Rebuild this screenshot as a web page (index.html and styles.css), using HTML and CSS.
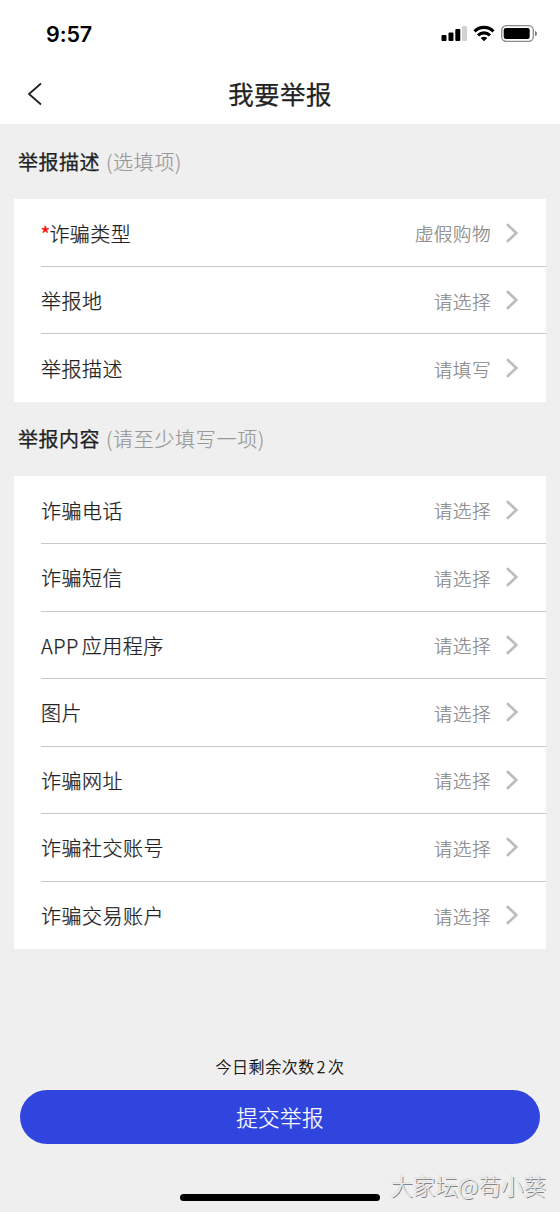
FILE: index.html
```html
<!DOCTYPE html>
<html lang="zh-CN">
<head>
<meta charset="utf-8">
<title>我要举报</title>
<link rel="stylesheet" href="styles.css">
</head>
<body>
<svg class="defs" width="0" height="0"><symbol id="chevron" viewBox="0 0 12 20"><path d="M1.800 2 10.300 10 1.800 18" fill="none" stroke="#bdbdbd" stroke-width="2.800" stroke-linecap="round"/></symbol></svg>
<div class="screen">
  <div class="status">
    <span class="time">9:57</span>
    <svg class="status-icons" width="98" height="20" viewBox="0 0 98 20">
      <rect x="1.500" y="11" width="5" height="6" rx="1"/>
      <rect x="8.500" y="8.500" width="5" height="8.500" rx="1"/>
      <rect x="15.300" y="5" width="5" height="12" rx="1"/>
      <rect x="22" y="2" width="5" height="15" rx="1" fill="#d2d2d2"/>
      <g fill="none" stroke="#000" stroke-width="3.100">
        <path d="M34.500 7.300a13.500 13.500 0 0 1 19 0"/>
        <path d="M38 11.300a8.700 8.700 0 0 1 12 0"/>
      </g>
      <path d="M40.700 14q3.300-2.500 6.600 0L44 17.300Z"/>
      <rect x="61.700" y="1.700" width="31.600" height="15.600" rx="4.500" fill="none" stroke="#8a8a8a" stroke-width="1.300"/>
      <rect x="63.700" y="4" width="26" height="11" rx="2.300"/>
      <path d="M95 7q2 .5 2 2.500t-2 2.500Z" fill="#777"/>
    </svg>
  </div>
  <header class="nav">
    <svg class="back" width="16" height="24" viewBox="0 0 16 24"><path d="M14 1.500 2 12l12 10.500" fill="none" stroke="#222" stroke-width="1.800"/></svg>
    <h1 class="title">我要举报</h1>
  </header>
  <main class="content">
    <h2 class="section">举报描述 <span class="hint">(选填项)</span></h2>
    <ul class="card">
      <li class="row"><span class="label"><span class="star">*</span>诈骗类型</span><span class="value">虚假购物</span><svg class="chev"><use href="#chevron"/></svg></li>
      <li class="row"><span class="label">举报地</span><span class="value">请选择</span><svg class="chev"><use href="#chevron"/></svg></li>
      <li class="row"><span class="label">举报描述</span><span class="value">请填写</span><svg class="chev"><use href="#chevron"/></svg></li>
    </ul>
    <h2 class="section">举报内容 <span class="hint">(请至少填写一项)</span></h2>
    <ul class="card card-wide">
      <li class="row"><span class="label">诈骗电话</span><span class="value">请选择</span><svg class="chev"><use href="#chevron"/></svg></li>
      <li class="row"><span class="label">诈骗短信</span><span class="value">请选择</span><svg class="chev"><use href="#chevron"/></svg></li>
      <li class="row"><span class="label"><span class="latin">APP</span>应用程序</span><span class="value">请选择</span><svg class="chev"><use href="#chevron"/></svg></li>
      <li class="row"><span class="label">图片</span><span class="value">请选择</span><svg class="chev"><use href="#chevron"/></svg></li>
      <li class="row"><span class="label">诈骗网址</span><span class="value">请选择</span><svg class="chev"><use href="#chevron"/></svg></li>
      <li class="row"><span class="label">诈骗社交账号</span><span class="value">请选择</span><svg class="chev"><use href="#chevron"/></svg></li>
      <li class="row"><span class="label">诈骗交易账户</span><span class="value">请选择</span><svg class="chev"><use href="#chevron"/></svg></li>
    </ul>
  </main>
  <footer class="footer">
    <p class="remain">今日剩余次数<span class="count">2</span>次</p>
    <button class="submit">提交举报</button>
    <div class="home"></div>
  </footer>
  <span class="watermark">大家坛@苟小葵</span>
</div>
</body>
</html>
```
FILE: styles.css
```css
* { box-sizing: border-box; }
body { margin: 0; font-family: "Noto Sans CJK SC", sans-serif; color: #222; }
.defs { display: block; }
.screen { position: relative; display: flex; flex-direction: column; width: 560px; height: 1212px; overflow: hidden; background: #efefef; }
.status { display: flex; justify-content: space-between; height: 64px; padding: 24px 22px 0 46px; background: #fff; }
.time { font: 600 21.5px/20px Inter, sans-serif; color: #000; letter-spacing: -.1px; }
.status-icons { display: block; }
.nav { display: grid; grid-template-columns: 60px 1fr 60px; align-items: center; height: 60px; padding-bottom: 1px; background: #fff; }
.back { margin-left: 27px; }
.title { margin: 0; padding-bottom: 2px; text-align: center; font-size: 25.5px; font-weight: 400; line-height: 36px; letter-spacing: .4px; -webkit-text-stroke: .25px #222; }
.content { padding: 0 14px; }
.section { margin: 0; height: 74px; padding-left: 4px; font-size: 20px; font-weight: 400; line-height: 73px; letter-spacing: .5px; white-space: pre; -webkit-text-stroke: .25px #222; }
.content .section:first-child { height: 75px; padding-top: 1px; line-height: 74px; }
.hint { margin-left: 1px; font-weight: 300; letter-spacing: .7px; color: #999; -webkit-text-stroke: .2px #999; }
.card { margin: 0; padding: 0; list-style: none; background: #fff; }
.row { display: flex; align-items: center; height: 67px; margin-left: 27px; padding-right: 28px; border-bottom: 1px solid #c8c8c8; }
.row:first-child { height: 68px; }
.row:last-child { height: 68px; border-bottom: 0; }
.card-wide .row { height: 67.5px; }
.card-wide .row:first-child { height: 68px; }
.label { flex: 1; padding-top: 1px; font-size: 20px; font-weight: 300; letter-spacing: .5px; -webkit-text-stroke: .25px #222; }
.star { display: inline-block; margin-right: -1px; line-height: 20px; color: #f00; -webkit-text-stroke: .4px #f00; transform: translateY(1px) scale(1.15); }
.latin { margin-right: 3px; }
.value { font-size: 18.7px; font-weight: 300; letter-spacing: .4px; color: #888; -webkit-text-stroke: .2px #888; }
.chev { width: 12px; height: 20px; margin-left: 15px; }
.footer { display: flex; flex-direction: column; align-items: center; margin-top: auto; padding: 0 20px 11px; }
.remain { margin: 0 0 12px; font-size: 16px; font-weight: 300; line-height: 24px; letter-spacing: .55px; color: #000; -webkit-text-stroke: .25px #000; }
.count { margin: 0 2px; }
.submit { width: 520px; height: 54px; padding: 0; border: 0; border-radius: 27px; background: #3045dd; color: #fff; font: 300 21.5px/54px "Noto Sans CJK SC", sans-serif; letter-spacing: .4px; -webkit-text-stroke: .25px #fff; }
.home { width: 200px; height: 7px; margin-top: 50px; border-radius: 4px; background: #000; }
.watermark { position: absolute; right: 14px; bottom: 10px; font-size: 22.5px; font-weight: 300; line-height: 34px; color: #ececec; text-shadow: 1px 1px 0 #858585, -1px -1px 0 #e0e0e0; }
```
